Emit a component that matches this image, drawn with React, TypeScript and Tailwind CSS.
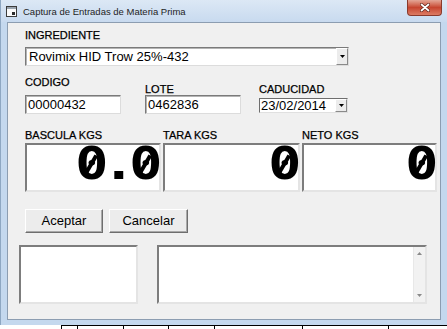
import React from "react";

const sunken =
  "border-2 border-t-[#7d7d7d] border-l-[#7d7d7d] border-b-[#e4e4e4] border-r-[#e4e4e4] bg-white";
const field =
  "border border-t-[#7a7a7a] border-l-[#7a7a7a] border-b-[#dcdcdc] border-r-[#dcdcdc] bg-white shadow-[inset_1px_1px_0_#b4b4b4]";
const button =
  "h-[24px] flex items-center justify-center text-[13px] bg-[#ececec] border border-t-white border-l-white border-b-[#6e6e6e] border-r-[#6e6e6e] shadow-[inset_-1px_-1px_0_#a9a9a9]";

const DropArrow = () => (
  <div className="w-[12px] h-full flex items-center justify-center bg-[#ececec] border border-t-white border-l-white border-b-[#8a8a8a] border-r-[#8a8a8a]">
    <svg width="5" height="3" viewBox="0 0 5 3">
      <path d="M0 0h5L2.5 3z" fill="#000" />
    </svg>
  </div>
);

const Label = ({ children }: { children: React.ReactNode }) => (
  <div className="text-[11px] leading-[12px] h-[12px] text-black [-webkit-text-stroke:0.25px_#000]">{children}</div>
);

// scale display: wide blocky digits, zeros drawn slashed
const Digits = ({ value }: { value: string }) => (
  <div className="flex items-start font-['DejaVu_Sans_Mono',monospace] font-bold text-[44px] leading-[38px] h-[38px]">
    {value.split("").map((c, i) => (
      <span key={i} className="relative w-[27px] flex justify-center">
        <span className="inline-block tracking-[-5px] scale-x-[1.25] -translate-x-[3px]">{c}</span>
        {c === "0" && (
          <span className="absolute left-[11px] top-[9px] w-[4px] h-[21px] bg-black rotate-[30deg]" />
        )}
      </span>
    ))}
  </div>
);

const BigBox = ({ label, value, width }: { label: string; value: string; width: string }) => (
  <div className={`flex flex-col ${width}`}>
    <Label>{label}</Label>
    <div className={`${sunken} mt-[2px] h-[49px] flex justify-end`}>
      <Digits value={value} />
    </div>
  </div>
);

export default function App() {
  return (
    <div className="w-[447px] h-[329px] bg-white overflow-hidden font-['Liberation_Sans',Arial,sans-serif] text-black">
      {/* window */}
      <div className="w-[447px] h-[325px] flex flex-col bg-[#c4d8ee] border-l border-[#8ea7c2]">
        {/* title bar */}
        <div className="h-[22px] flex items-start bg-gradient-to-b from-[#dce8f5] to-[#c8daef]">
          <svg width="11" height="11" viewBox="0 0 11 11" className="mt-[6px] ml-[5px]">
            <rect x="0.5" y="0.5" width="10" height="10" fill="#fafafa" stroke="#3c3c3c" />
            <rect x="1" y="1" width="9" height="2" fill="#9aa4ae" />
            <rect x="6" y="6" width="3" height="3" fill="#2b2b2b" />
          </svg>
          <span className="ml-[6px] mt-[6px] text-[9.5px] leading-[11px] text-[#1e1e1e]">
            Captura de Entradas de Materia Prima
          </span>
          <div className="ml-auto mr-[5px] w-[35px] h-[16px] rounded-b-[4px] border border-t-0 border-[#8a3a2c] bg-gradient-to-b from-[#e3a696] via-[#c6452f] to-[#dc7b63] flex items-center justify-center">
            <svg width="10" height="9" viewBox="0 0 10 9">
              <path d="M1.5 1.5l7 6M8.5 1.5l-7 6" stroke="#5a1f15" strokeWidth="3" strokeLinecap="round" />
              <path d="M1.5 1.5l7 6M8.5 1.5l-7 6" stroke="#fff" strokeWidth="1.8" strokeLinecap="round" />
            </svg>
          </div>
        </div>

        {/* client area */}
        <div className="ml-[6px] w-[434px] h-[298px] bg-[#f0f0f0] border border-[#8c9db1] flex flex-col">
          <div className="pl-[17px] pt-[6px] flex flex-col">
            <div className="text-[11px] leading-[13px] h-[13px] [-webkit-text-stroke:0.25px_#000]">INGREDIENTE</div>
            <div className={`${field} mt-[5px] w-[324px] h-[19px] flex items-stretch`}>
              <span className="flex-1 pl-[3px] text-[13px] leading-[17px]">Rovimix HID Trow 25%-432</span>
              <DropArrow />
            </div>

            <div className="mt-[10px] flex items-end">
              <div className="w-[96px] flex flex-col">
                <Label>CODIGO</Label>
                <div className={`${field} mt-[7px] h-[19px] pl-[2px] text-[13px] leading-[17px]`}>00000432</div>
              </div>
              <div className="ml-[24px] w-[96px] flex flex-col">
                <Label>LOTE</Label>
                <div className={`${field} h-[19px] pl-[2px] text-[13px] leading-[17px]`}>0462836</div>
              </div>
              <div className="ml-[18px] w-[89px] flex flex-col">
                <Label>CADUCIDAD</Label>
                <div className="mt-[3px] mb-[1px] h-[15px] flex items-stretch bg-white border border-t-[#6e6e6e] border-l-[#6e6e6e] border-b-[#e0e0e0] border-r-[#e0e0e0]">
                  <span className="flex-1 pl-[1px] text-[13px] leading-[13px]">23/02/2014</span>
                  <DropArrow />
                </div>
              </div>
            </div>

            <div className="mt-[15px] flex gap-[2px]">
              <BigBox label="BASCULA KGS" value="0.0" width="w-[136px]" />
              <BigBox label="TARA KGS" value="0" width="w-[137px]" />
              <BigBox label="NETO KGS" value="0" width="w-[135px]" />
            </div>

            <div className="mt-[17px] flex gap-[6px]">
              <div className={`${button} w-[78px]`}>Aceptar</div>
              <div className={`${button} w-[79px]`}>Cancelar</div>
            </div>
          </div>

          <div className="pl-[11px] mt-[12px] flex">
            <div className={`${sunken} w-[119px] h-[59px]`} />
            <div className={`${sunken} ml-[19px] w-[270px] h-[59px] flex justify-end`}>
              <div className="w-[12px] h-full bg-[#f2f2f2] border-l border-[#e8e8e8] flex flex-col items-center justify-between py-[5px]">
                <svg width="5" height="3" viewBox="0 0 5 3">
                  <path d="M0 3h5L2.5 0z" fill="#8a8a8a" />
                </svg>
                <svg width="5" height="3" viewBox="0 0 5 3">
                  <path d="M0 0h5L2.5 3z" fill="#8a8a8a" />
                </svg>
              </div>
            </div>
          </div>
        </div>
      </div>

      {/* background grid peeking below the window */}
      <div className="h-[4px] flex">
        <div className="w-[61px]" />
        <div className="flex-1 flex border-t border-black">
          <div className="w-[16px] border-l border-black" />
          <div className="w-[46px] border-l border-black" />
          <div className="w-[45px] border-l border-black" />
          <div className="w-[46px] border-l border-black" />
          <div className="w-[88px] border-l border-black" />
          <div className="w-[86px] border-l border-black" />
          <div className="flex-1 border-l border-black" />
        </div>
      </div>
    </div>
  );
}
